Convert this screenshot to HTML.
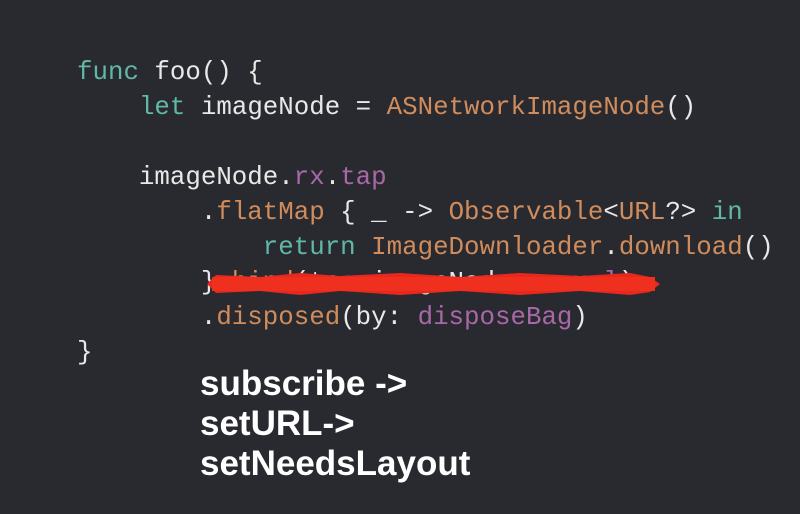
<!DOCTYPE html>
<html><head><meta charset="utf-8"><style>
html,body{margin:0;padding:0;}
body{width:800px;height:514px;background:#292a30;position:relative;overflow:hidden;}
pre{position:absolute;left:77px;top:55px;margin:0;font-family:"Liberation Mono",monospace;font-size:25.8px;line-height:35px;color:#e8e8e8;}
.k{color:#5fb8a8}.o{color:#d08c5c}.p{color:#a868a8}
.b{position:absolute;left:200px;top:364px;font-family:"Liberation Sans",sans-serif;font-weight:bold;font-size:35px;line-height:40px;color:#fff;}
</style></head><body>
<pre><span class="k">func</span> foo() {
    <span class="k">let</span> imageNode = <span class="o">ASNetworkImageNode</span>()

    imageNode.<span class="p">rx</span>.<span class="p">tap</span>
        .<span class="o">flatMap</span> { _ -&gt; <span class="o">Observable</span>&lt;<span class="o">URL</span>?&gt; <span class="k">in</span>
            <span class="k">return</span> <span class="o">ImageDownloader</span>.<span class="o">download</span>()
        }.<span class="o">bind</span>(to: imageNode.<span class="p">rx</span>.<span class="p">url</span>)
        .<span class="o">disposed</span>(by: <span class="p">disposeBag</span>)
}</pre>
<svg style="position:absolute;left:0;top:0" width="800" height="514">
<path d="M207 284 L216 275 L260 277 L300 273 L340 276 L400 273 L460 277 L520 273 L580 276 L630 273 L650 277 L660 284 L650 292 L630 295 L580 291 L520 295 L460 291 L400 295 L340 291 L300 295 L260 291 L216 293 Z" fill="#e8281e"/>
<path d="M212 284 L655 284" stroke="#f0301f" stroke-width="14"/>
</svg>
<div class="b">subscribe -&gt;<br>setURL-&gt;<br>setNeedsLayout</div>
</body></html>
